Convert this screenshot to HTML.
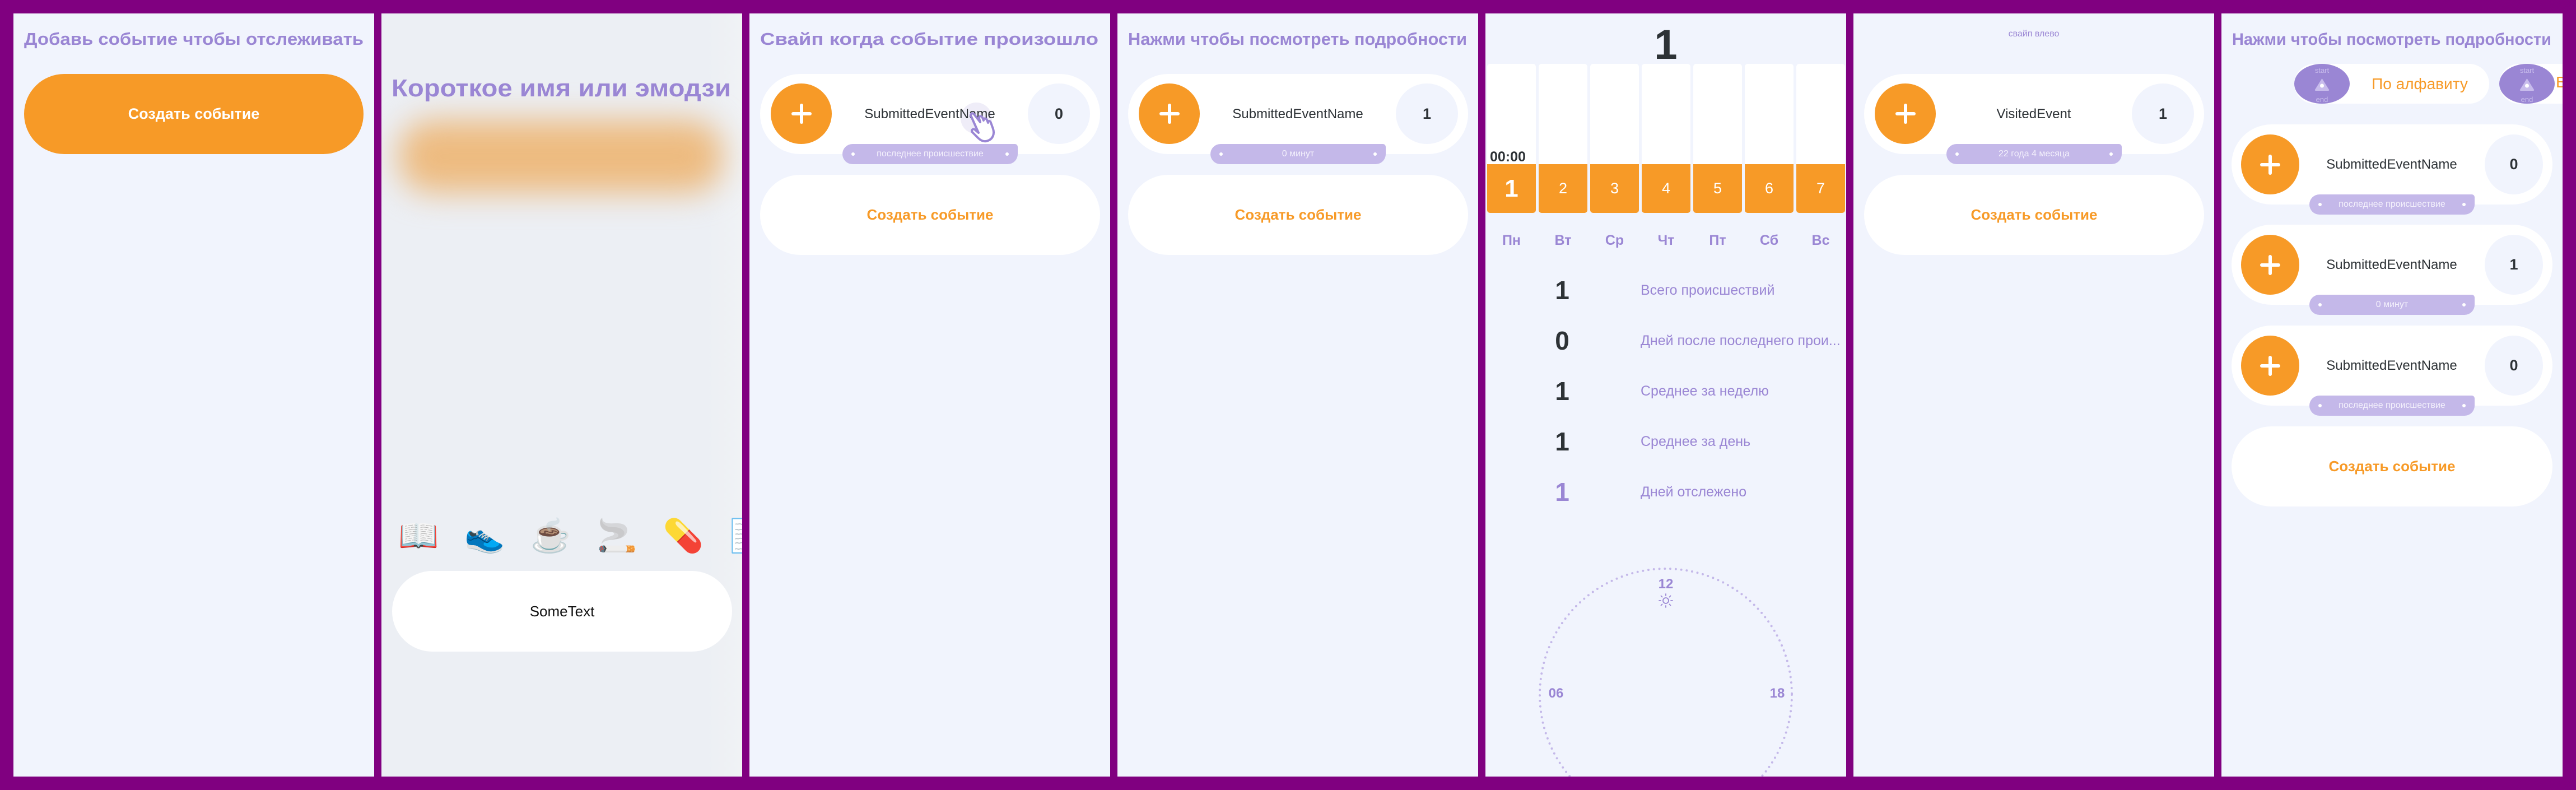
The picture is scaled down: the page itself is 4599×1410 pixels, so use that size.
<!DOCTYPE html>
<html><head><meta charset="utf-8"><style>
*{margin:0;padding:0;box-sizing:border-box}
body{width:4599px;height:1410px;background:#800080;position:relative;overflow:hidden;font-family:"Liberation Sans","DejaVu Sans",sans-serif}
.p{position:absolute;top:24px;height:1362px;width:644px;background:#f1f4fd;overflow:hidden}
.a{position:absolute}
.t{position:absolute;left:19px;top:24px;width:606px;height:42px}
.card{position:absolute;background:#fff;border-radius:72px}
.oc{position:absolute;background:#f79a27;border-radius:50%}
.oc:before{content:"";position:absolute;left:50%;top:50%;width:36px;height:6px;margin:-3px 0 0 -18px;background:#fff;border-radius:3px}
.oc:after{content:"";position:absolute;left:50%;top:50%;width:6px;height:36px;margin:-18px 0 0 -3px;background:#fff;border-radius:3px}
.cc{position:absolute;background:#f1f4fd;border-radius:50%;font-weight:bold;font-size:27px;color:#2d3236;display:flex;align-items:center;justify-content:center}
.nm{position:absolute;font-size:24px;color:#2d3236;text-align:center;white-space:nowrap}
.pill{position:absolute;height:36px;background:#c4b8e9;border-radius:18px 5px 18px 18px;color:#f4f1fc;font-size:16px;display:flex;align-items:center;justify-content:center}
.pill:before,.pill:after{content:"";position:absolute;top:15px;width:6px;height:6px;border-radius:50%;background:#fff}
.pill:before{left:16px}.pill:after{right:16px}
.btn{position:absolute;background:#fff;border-radius:72px;color:#f79a27;font-weight:bold;font-size:26px;display:flex;align-items:center;justify-content:center}
</style></head><body>

<!-- Panel 1 -->
<div class="p" style="left:24px">
 <svg class="t" viewBox="0 0 606 42"><text x="0" y="32" font-family="Liberation Sans" font-weight="bold" font-size="31" fill="#9a86d4" textLength="606" lengthAdjust="spacingAndGlyphs">Добавь событие чтобы отслеживать</text></svg>
 <div class="a" style="left:19px;top:108px;width:606px;height:143px;background:#f79a27;border-radius:72px;color:#fff;font-weight:bold;font-size:27px;display:flex;align-items:center;justify-content:center">Создать событие</div>
</div>

<!-- Panel 2 -->
<div class="p" style="left:681px;background:linear-gradient(90deg,#eceff4 0%,#eceff4 90%,#f0f2f5 100%)">
 <div class="a" style="left:30px;top:190px;width:580px;height:130px;background:#edbb80;filter:blur(28px);border-radius:60px"></div>
 <svg class="a" style="left:18px;top:106px;width:610px;height:56px" viewBox="0 0 610 56"><text x="0" y="42" font-family="Liberation Sans" font-weight="bold" font-size="44" fill="#9a86d4" textLength="606" lengthAdjust="spacingAndGlyphs">Короткое имя или эмодзи</text></svg>
 <div class="a" style="left:30px;top:893px;width:700px;font-size:58px;white-space:nowrap;letter-spacing:46px;line-height:80px;font-family:'Noto Color Emoji','DejaVu Sans',sans-serif">📖👟☕🚬💊📝</div>
 <div class="a" style="left:19px;top:995px;width:607px;height:144px;background:#fff;border-radius:72px;font-size:26px;color:#111;display:flex;align-items:center;justify-content:center">SomeText</div>
</div>

<!-- Panel 3 -->
<div class="p" style="left:1338px">
 <svg class="t" viewBox="0 0 606 42"><text x="0" y="32" font-family="Liberation Sans" font-weight="bold" font-size="31" fill="#9a86d4" textLength="604" lengthAdjust="spacingAndGlyphs">Свайп когда событие произошло</text></svg>
 <div class="card" style="left:19px;top:108px;width:607px;height:143px"></div>
 <div class="oc" style="left:38px;top:125px;width:109px;height:108px"></div>
 <div class="cc" style="left:497px;top:125px;width:111px;height:108px">0</div>
 <div class="a" style="left:377px;top:159px;width:56px;height:56px;border-radius:50%;background:#efedf8"></div>
 <div class="nm" style="left:172px;top:166px;width:300px">SubmittedEventName</div>
 <svg class="a" style="left:388px;top:170px;width:60px;height:66px" viewBox="0 0 60 66"><path d="M8 14 C5 10 10 6 13 10 L24 24 L22 17 C21 13 26 12 28 16 L30 21 C29 17 34 16 36 20 L38 25 C37 21 42 21 43 25 L47 36 C50 46 46 54 38 57 C31 60 25 57 20 52 L10 42 C7 39 11 35 14 37 L21 43 Z" fill="#fff" stroke="#9a86d4" stroke-width="4" stroke-linejoin="round"/></svg>
 <div class="pill" style="left:166px;top:233px;width:313px">последнее происшествие</div>
 <div class="btn" style="left:19px;top:288px;width:607px;height:143px">Создать событие</div>
</div>

<!-- Panel 4 -->
<div class="p" style="left:1995px">
 <svg class="t" viewBox="0 0 606 42"><text x="0" y="32" font-family="Liberation Sans" font-weight="bold" font-size="31" fill="#9a86d4" textLength="605" lengthAdjust="spacingAndGlyphs">Нажми чтобы посмотреть подробности</text></svg>
 <div class="card" style="left:19px;top:108px;width:607px;height:143px"></div>
 <div class="oc" style="left:38px;top:125px;width:109px;height:108px"></div>
 <div class="cc" style="left:497px;top:125px;width:111px;height:108px">1</div>
 <div class="nm" style="left:172px;top:166px;width:300px">SubmittedEventName</div>
 <div class="pill" style="left:166px;top:233px;width:313px">0 минут</div>
 <div class="btn" style="left:19px;top:288px;width:607px;height:143px">Создать событие</div>
</div>

<!-- Panel 5 -->
<div class="p" style="left:2652px">
 <div class="a" style="left:0;top:14px;width:644px;text-align:center;font-size:74px;font-weight:bold;color:#2d3236;line-height:84px">1</div>
 <div class="a" style="left:3px;top:90px;width:640px;height:266px">
  <div class="a" style="left:0;top:0;width:87px;height:266px;background:#fff;border-radius:5px"></div>
  <div class="a" style="left:92px;top:0;width:87px;height:266px;background:#fff;border-radius:5px"></div>
  <div class="a" style="left:184px;top:0;width:87px;height:266px;background:#fff;border-radius:5px"></div>
  <div class="a" style="left:276px;top:0;width:87px;height:266px;background:#fff;border-radius:5px"></div>
  <div class="a" style="left:368px;top:0;width:87px;height:266px;background:#fff;border-radius:5px"></div>
  <div class="a" style="left:460px;top:0;width:87px;height:266px;background:#fff;border-radius:5px"></div>
  <div class="a" style="left:552px;top:0;width:87px;height:266px;background:#fff;border-radius:5px"></div>
  <div class="a" style="left:5px;top:152px;font-size:25px;font-weight:bold;color:#2d3236">00:00</div>
  <div class="a" style="left:0;top:179px;width:87px;height:87px;background:#f79a27;border-radius:0 0 5px 5px;color:#fff;font-size:44px;font-weight:bold;display:flex;align-items:center;justify-content:center">1</div>
  <div class="a" style="left:92px;top:179px;width:87px;height:87px;background:#f79a27;border-radius:0 0 5px 5px;color:#fff;font-size:27px;display:flex;align-items:center;justify-content:center">2</div>
  <div class="a" style="left:184px;top:179px;width:87px;height:87px;background:#f79a27;border-radius:0 0 5px 5px;color:#fff;font-size:27px;display:flex;align-items:center;justify-content:center">3</div>
  <div class="a" style="left:276px;top:179px;width:87px;height:87px;background:#f79a27;border-radius:0 0 5px 5px;color:#fff;font-size:27px;display:flex;align-items:center;justify-content:center">4</div>
  <div class="a" style="left:368px;top:179px;width:87px;height:87px;background:#f79a27;border-radius:0 0 5px 5px;color:#fff;font-size:27px;display:flex;align-items:center;justify-content:center">5</div>
  <div class="a" style="left:460px;top:179px;width:87px;height:87px;background:#f79a27;border-radius:0 0 5px 5px;color:#fff;font-size:27px;display:flex;align-items:center;justify-content:center">6</div>
  <div class="a" style="left:552px;top:179px;width:87px;height:87px;background:#f79a27;border-radius:0 0 5px 5px;color:#fff;font-size:27px;display:flex;align-items:center;justify-content:center">7</div>
 </div>
 <div class="a" style="left:3px;top:390px;width:644px;font-size:25px;font-weight:bold;color:#9a86d4;line-height:30px">
  <span class="a" style="left:0;width:87px;text-align:center">Пн</span><span class="a" style="left:92px;width:87px;text-align:center">Вт</span><span class="a" style="left:184px;width:87px;text-align:center">Ср</span><span class="a" style="left:276px;width:87px;text-align:center">Чт</span><span class="a" style="left:368px;width:87px;text-align:center">Пт</span><span class="a" style="left:460px;width:87px;text-align:center">Сб</span><span class="a" style="left:552px;width:87px;text-align:center">Вс</span>
 </div>
 <div class="a" style="left:100px;top:449px;width:74px;text-align:center;font-size:46px;font-weight:bold;color:#2d3236;line-height:90px">1<br>0<br>1<br>1<br><span style="color:#9a86d4">1</span></div>
 <div class="a" style="left:277px;top:449px;width:367px;font-size:25px;color:#9a86d4;line-height:90px;white-space:nowrap;overflow:hidden">Всего происшествий<br>Дней после последнего прои...<br>Среднее за неделю<br>Среднее за день<br>Дней отслежено</div>
 <svg class="a" style="left:0;top:980px;width:644px;height:400px" viewBox="0 0 644 400">
  <circle cx="322" cy="236" r="225" fill="none" stroke="#c4b8e9" stroke-width="4" stroke-linecap="round" stroke-dasharray="0 9.8"/>
  <text x="322" y="46" text-anchor="middle" font-family="Liberation Sans" font-weight="bold" font-size="24" fill="#9a86d4">12</text>
  <text x="126" y="241" text-anchor="middle" font-family="Liberation Sans" font-weight="bold" font-size="24" fill="#9a86d4">06</text>
  <text x="521" y="241" text-anchor="middle" font-family="Liberation Sans" font-weight="bold" font-size="24" fill="#9a86d4">18</text>
  <g stroke="#9a86d4" stroke-width="1.8" fill="none" stroke-linecap="round"><circle cx="322" cy="68" r="5"/><path d="M322 56v3M322 77v3M310 68h3M331 68h3M313.5 59.5l2 2M328.5 74.5l2 2M313.5 76.5l2-2M328.5 61.5l2-2"/></g>
 </svg>
</div>

<!-- Panel 6 -->
<div class="p" style="left:3309px">
 <div class="a" style="left:0;top:28px;width:644px;text-align:center;font-size:16px;color:#9a86d4">свайп влево</div>
 <div class="card" style="left:19px;top:108px;width:607px;height:143px"></div>
 <div class="oc" style="left:38px;top:125px;width:109px;height:108px"></div>
 <div class="cc" style="left:497px;top:125px;width:111px;height:108px">1</div>
 <div class="nm" style="left:172px;top:166px;width:300px">VisitedEvent</div>
 <div class="pill" style="left:166px;top:233px;width:313px">22 года 4 месяца</div>
 <div class="btn" style="left:19px;top:288px;width:607px;height:143px">Создать событие</div>
</div>

<!-- Panel 7 -->
<div class="p" style="left:3966px;width:609px">
 <svg class="a" style="left:19px;top:24px;width:580px;height:42px" viewBox="0 0 580 42"><text x="0" y="32" font-family="Liberation Sans" font-weight="bold" font-size="30" fill="#9a86d4" textLength="570" lengthAdjust="spacingAndGlyphs">Нажми чтобы посмотреть подробности</text></svg>
 <div class="a" style="left:130px;top:90px;width:348px;height:71px;background:#fff;border-radius:36px"></div>
 <div class="a" style="left:496px;top:90px;width:200px;height:71px;background:#fff;border-radius:36px"></div>
 <div class="a" style="left:230px;top:90px;width:248px;height:71px;color:#f79a27;font-size:28px;display:flex;align-items:center;justify-content:center">По алфавиту</div>
 <div class="a" style="left:597px;top:107px;color:#f79a27;font-size:28px">В</div>
 <div class="a" style="left:130px;top:90px;width:99px;height:71px;background:#9a86d4;border-radius:50%"></div>
 <div class="a" style="left:496px;top:90px;width:99px;height:71px;background:#9a86d4;border-radius:50%"></div>
 <svg class="a" style="left:130px;top:90px;width:99px;height:71px" viewBox="0 0 99 71"><text x="49.5" y="16" text-anchor="middle" font-family="Liberation Sans" font-size="13" fill="#c8bcec">start</text><text x="49.5" y="68" text-anchor="middle" font-family="Liberation Sans" font-size="13" fill="#c8bcec">end</text><path d="M49.5 26 L62 46 Q63 48 60 48 L39 48 Q36 48 37 46 Z" fill="#c8bcec"/><circle cx="49.5" cy="39" r="3.5" fill="#fff"/></svg>
 <svg class="a" style="left:496px;top:90px;width:99px;height:71px" viewBox="0 0 99 71"><text x="49.5" y="16" text-anchor="middle" font-family="Liberation Sans" font-size="13" fill="#c8bcec">start</text><text x="49.5" y="68" text-anchor="middle" font-family="Liberation Sans" font-size="13" fill="#c8bcec">end</text><path d="M49.5 26 L62 46 Q63 48 60 48 L39 48 Q36 48 37 46 Z" fill="#c8bcec"/><circle cx="49.5" cy="39" r="3.5" fill="#fff"/></svg>

 <div class="card" style="left:18px;top:198px;width:573px;height:143px"></div>
 <div class="oc" style="left:35px;top:216px;width:104px;height:107px"></div>
 <div class="cc" style="left:470px;top:216px;width:104px;height:107px">0</div>
 <div class="nm" style="left:154px;top:256px;width:300px">SubmittedEventName</div>
 <div class="pill" style="left:157px;top:323px;width:295px">последнее происшествие</div>

 <div class="card" style="left:18px;top:377px;width:573px;height:143px"></div>
 <div class="oc" style="left:35px;top:395px;width:104px;height:107px"></div>
 <div class="cc" style="left:470px;top:395px;width:104px;height:107px">1</div>
 <div class="nm" style="left:154px;top:435px;width:300px">SubmittedEventName</div>
 <div class="pill" style="left:157px;top:502px;width:295px">0 минут</div>

 <div class="card" style="left:18px;top:557px;width:573px;height:143px"></div>
 <div class="oc" style="left:35px;top:575px;width:104px;height:107px"></div>
 <div class="cc" style="left:470px;top:575px;width:104px;height:107px">0</div>
 <div class="nm" style="left:154px;top:615px;width:300px">SubmittedEventName</div>
 <div class="pill" style="left:157px;top:682px;width:295px">последнее происшествие</div>

 <div class="btn" style="left:18px;top:737px;width:573px;height:143px">Создать событие</div>
</div>
</body></html>
